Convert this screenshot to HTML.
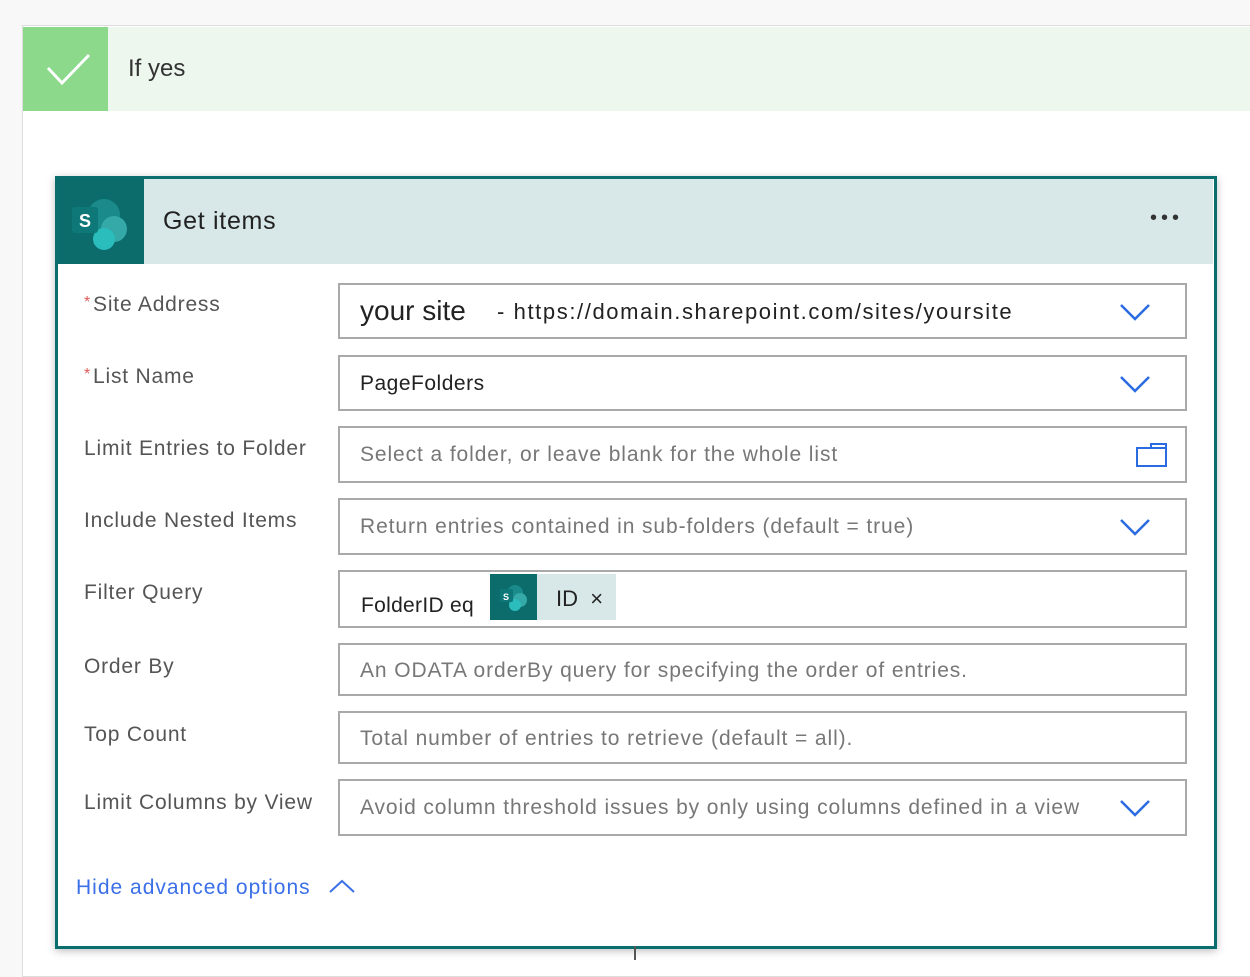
<!DOCTYPE html>
<html><head><style>
body{margin:0;width:1250px;height:968px;background:#f8f8f8;position:relative;overflow:hidden;font-family:"Liberation Sans",sans-serif;}
.abs{position:absolute;}
.outer{left:22px;top:25px;width:1240px;height:950px;background:#fff;border:1px solid #ddd;}
.lbl{position:absolute;left:84px;font-size:21px;color:#555;letter-spacing:0.8px}
.lbl .s{color:#e05a5a;font-size:16px;vertical-align:4px;margin-right:2px}
.inp{position:absolute;left:338px;width:845px;border:2px solid #a9a9a9;background:#fff;}
.ph{position:absolute;left:20px;font-size:21px;color:#777;letter-spacing:0.9px;white-space:nowrap}
.chev{position:absolute;right:34px;}
</style></head><body>
<div class="abs outer"></div>
<div class="abs" style="left:23px;top:27px;width:1227px;height:84px;background:#edf7ed"></div>
<div class="abs" style="left:23px;top:27px;width:85px;height:84px;background:#8cd98c">
<svg width="85" height="84"><path d="M25 41 L39 56 L66 28" stroke="#fff" stroke-width="3" fill="none"/></svg></div>
<div class="abs" style="left:128px;top:55px;font-size:24px;color:#333">If yes</div>

<div class="abs" style="left:55px;top:176px;width:1156px;height:767px;border:3px solid #0b6e6e;background:#fff;box-shadow:0 2px 8px rgba(0,0,0,.25)"></div>
<div class="abs" style="left:58px;top:179px;width:1155px;height:85px;background:#d8e8e8"></div>
<div class="abs" style="left:58px;top:179px;width:86px;height:85px;background:#0b6c6b">
<svg width="86" height="85"><circle cx="46" cy="36" r="16" fill="#1a8a8a"/><circle cx="56" cy="50" r="13" fill="#35a8a8"/><circle cx="46" cy="60" r="11" fill="#2bbcbc"/><rect x="14" y="28" width="26" height="26" rx="3" fill="#0e7878"/><text x="21" y="48" font-size="18" font-weight="bold" fill="#fff" font-family="Liberation Sans">S</text></svg></div>
<div class="abs" style="left:163px;top:207px;font-size:25px;color:#222;letter-spacing:0.7px">Get items</div>
<div class="abs" style="left:1150px;top:207px;font-size:20px;color:#333;letter-spacing:4px">•••</div>

<div class="lbl" style="top:293px"><span class="s">*</span>Site Address</div>
<div class="inp" style="top:283px;height:52px"><span class="abs" style="left:20px;top:10px;font-size:28px;color:#222">your site</span><span class="abs" style="left:157px;top:14px;font-size:22px;color:#222;letter-spacing:1.6px;white-space:nowrap">- https://domain.sharepoint.com/sites/yoursite</span>
<svg class="chev" style="top:18px" width="32" height="18"><path d="M2 2 L16 16 L30 2" stroke="#2a6be0" stroke-width="2.5" fill="none"/></svg></div>

<div class="lbl" style="top:365px"><span class="s">*</span>List Name</div>
<div class="inp" style="top:355px;height:52px"><span class="abs" style="left:20px;top:15px;font-size:21px;color:#222;letter-spacing:0.5px">PageFolders</span>
<svg class="chev" style="top:18px" width="32" height="18"><path d="M2 2 L16 16 L30 2" stroke="#2a6be0" stroke-width="2.5" fill="none"/></svg></div>

<div class="lbl" style="top:437px">Limit Entries to Folder</div>
<div class="inp" style="top:426px;height:53px"><span class="ph" style="top:15px">Select a folder, or leave blank for the whole list</span>
<svg class="abs" style="right:16px;top:14px" width="34" height="26"><path d="M2 6 H16 V2 H31 V24 H2 Z M2 6 V24 M16 6 H31" stroke="#2a6be0" stroke-width="2" fill="none"/></svg></div>

<div class="lbl" style="top:509px">Include Nested Items</div>
<div class="inp" style="top:498px;height:53px"><span class="ph" style="top:15px">Return entries contained in sub-folders (default = true)</span>
<svg class="chev" style="top:18px" width="32" height="18"><path d="M2 2 L16 16 L30 2" stroke="#2a6be0" stroke-width="2.5" fill="none"/></svg></div>

<div class="lbl" style="top:581px">Filter Query</div>
<div class="inp" style="top:570px;height:54px"><span class="abs" style="left:21px;top:22px;font-size:21px;color:#222;letter-spacing:0.3px">FolderID eq</span>
<div class="abs" style="left:150px;top:2px;width:126px;height:46px;background:#d8e8e8"></div>
<div class="abs" style="left:150px;top:2px;width:47px;height:46px;background:#0b6c6b"><svg width="47" height="46"><circle cx="25" cy="19" r="8" fill="#1a8a8a"/><circle cx="30" cy="26" r="7" fill="#35a8a8"/><circle cx="25" cy="31" r="6" fill="#2bbcbc"/><rect x="10" y="15" width="13" height="13" rx="2" fill="#0e7878"/><text x="13" y="26" font-size="9" font-weight="bold" fill="#fff">S</text></svg></div>
<span class="abs" style="left:216px;top:14px;font-size:22px;color:#222">ID&nbsp;&nbsp;×</span></div>

<div class="lbl" style="top:655px">Order By</div>
<div class="inp" style="top:643px;height:49px"><span class="ph" style="top:14px">An ODATA orderBy query for specifying the order of entries.</span></div>

<div class="lbl" style="top:723px">Top Count</div>
<div class="inp" style="top:711px;height:49px"><span class="ph" style="top:14px">Total number of entries to retrieve (default = all).</span></div>

<div class="lbl" style="top:791px">Limit Columns by View</div>
<div class="inp" style="top:779px;height:53px"><span class="ph" style="top:15px">Avoid column threshold issues by only using columns defined in a view</span>
<svg class="chev" style="top:18px" width="32" height="18"><path d="M2 2 L16 16 L30 2" stroke="#2a6be0" stroke-width="2.5" fill="none"/></svg></div>

<div class="abs" style="left:76px;top:876px;font-size:21px;color:#3b6fe8;letter-spacing:1px">Hide advanced options</div>
<svg class="abs" style="left:328px;top:878px" width="28" height="16"><path d="M2 14 L14 3 L26 14" stroke="#3b6fe8" stroke-width="2" fill="none"/></svg>
<div class="abs" style="left:634px;top:946px;width:2px;height:14px;background:#555"></div>
</body></html>
